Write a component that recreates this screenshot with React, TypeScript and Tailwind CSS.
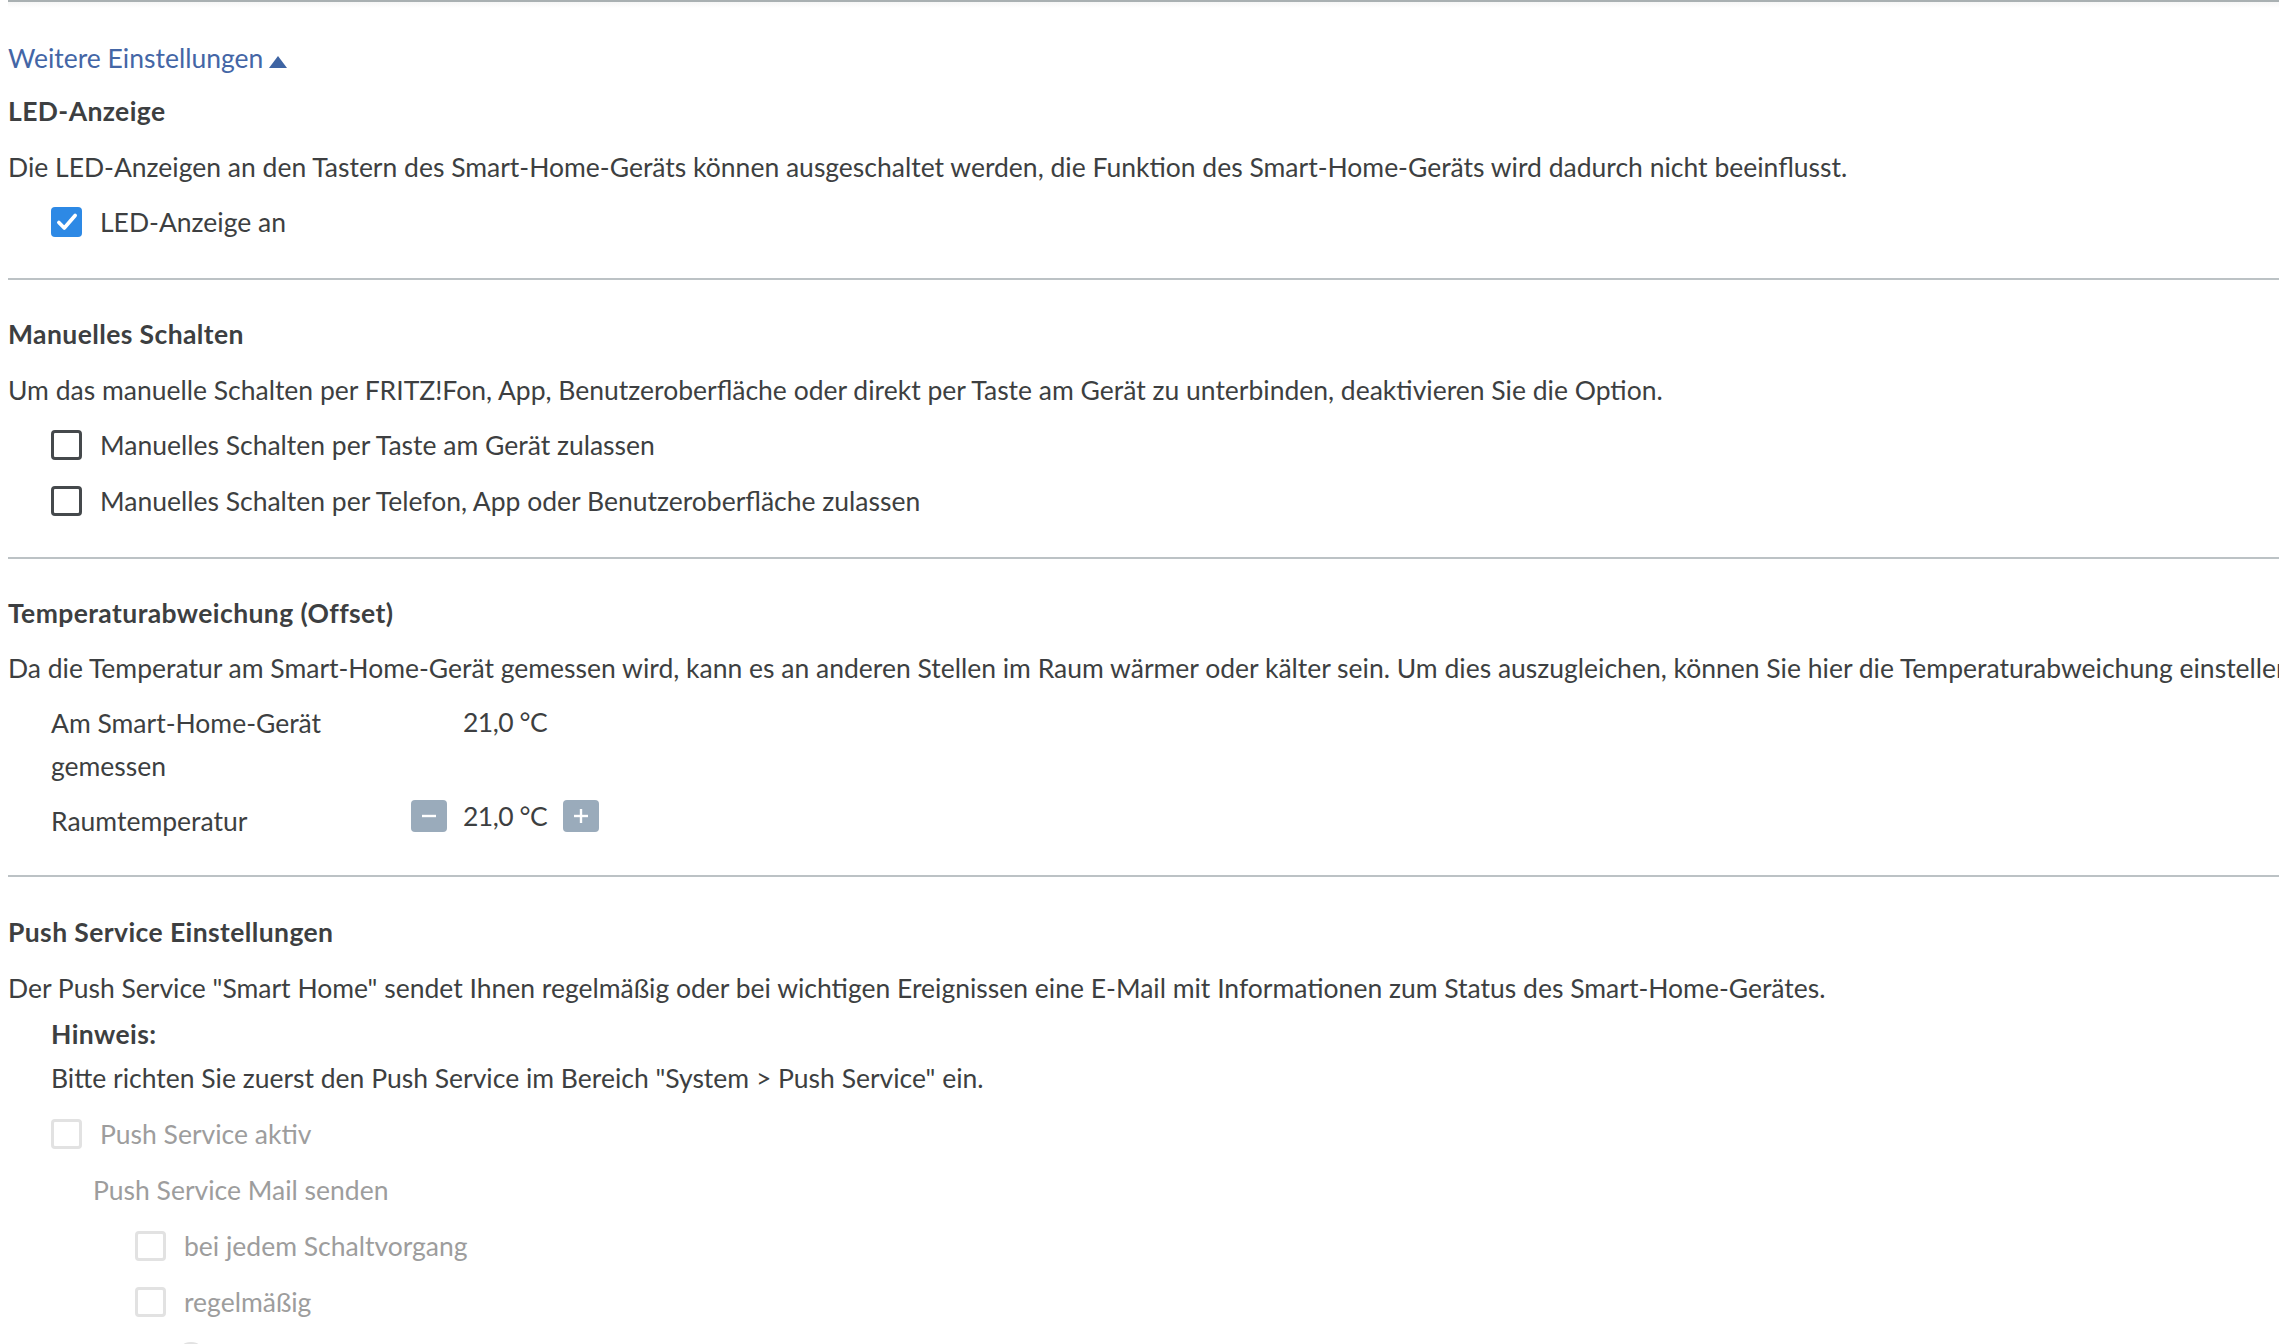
import React from 'react';
import clsx from 'clsx';

function Checkbox({ checked, disabled }: { checked?: boolean; disabled?: boolean }) {
  if (checked) {
    return (
      <span className="flex h-[30px] w-[31px] shrink-0 items-center justify-center rounded-[4px] bg-[#2d89e5]">
        <svg viewBox="0 0 24 24" className="h-[26px] w-[26px]" fill="none" stroke="white" strokeWidth={3.4} strokeLinecap="round" strokeLinejoin="round">
          <path d="M4.5 12.5l5 5L19.5 6" />
        </svg>
      </span>
    );
  }
  return (
    <span
      className={clsx(
        'h-[30px] w-[31px] shrink-0 rounded-[4px] border-[3px] bg-white',
        disabled ? 'border-[#e2e2e2]' : 'border-[#45494c]'
      )}
    />
  );
}

function CheckRow({ label, checked, disabled, indent }: { label: string; checked?: boolean; disabled?: boolean; indent: string }) {
  return (
    <label className={clsx('flex h-[44px] items-center gap-[18px]', indent, disabled && 'text-[#9d9d9d]')}>
      <Checkbox checked={checked} disabled={disabled} />
      <span>{label}</span>
    </label>
  );
}

function StepButton({ plus }: { plus?: boolean }) {
  return (
    <button className="flex h-[32px] w-[36px] items-center justify-center rounded-[4px] bg-[#9aabbb]">
      <svg viewBox="0 0 20 20" className="h-[20px] w-[20px]" stroke="white" strokeWidth={2.4} strokeLinecap="butt">
        <path d="M3 10h14" />
        {plus && <path d="M10 3v14" />}
      </svg>
    </button>
  );
}

export default function App() {
  return (
    <div className="min-h-screen w-full overflow-hidden bg-white font-['Lato','Liberation_Sans',sans-serif] text-[26.5px] leading-[44px] text-[#3d3f41]">
      <div className="pl-2">
        <div className="border-t-2 border-[#a9b0b2]" />
        <div className="h-[6px] bg-gradient-to-b from-[#f6f6f6] to-white" />

        <button className="mt-[28px] flex items-end gap-[6px] text-[#4466a6]">
          <span>Weitere Einstellungen</span>
          <svg viewBox="0 0 18 12" className="mb-[12px] h-[12px] w-[18px]" fill="#3e64a3">
            <path d="M9 0L18 12H0z" />
          </svg>
        </button>

        {/* LED-Anzeige */}
        <section className="mt-[9px] flex flex-col gap-[11.5px] border-b-2 border-[#bcc2c5] pb-[34px]">
          <h3 className="font-bold tracking-[0.4px]">LED-Anzeige</h3>
          <p className="whitespace-nowrap">
            Die LED-Anzeigen an den Tastern des Smart-Home-Geräts können ausgeschaltet werden, die Funktion des Smart-Home-Geräts wird dadurch nicht beeinflusst.
          </p>
          <CheckRow indent="pl-[43px]" label="LED-Anzeige an" checked />
        </section>

        {/* Manuelles Schalten */}
        <section className="flex flex-col gap-[11.5px] border-b-2 border-[#bcc2c5] pb-[34px] pt-[32px]">
          <h3 className="font-bold tracking-[0.4px]">Manuelles Schalten</h3>
          <p className="whitespace-nowrap">
            Um das manuelle Schalten per FRITZ!Fon, App, Benutzeroberfläche oder direkt per Taste am Gerät zu unterbinden, deaktivieren Sie die Option.
          </p>
          <CheckRow indent="pl-[43px]" label="Manuelles Schalten per Taste am Gerät zulassen" />
          <CheckRow indent="pl-[43px]" label="Manuelles Schalten per Telefon, App oder Benutzeroberfläche zulassen" />
        </section>

        {/* Temperaturabweichung */}
        <section className="flex flex-col gap-[11.5px] border-b-2 border-[#bcc2c5] pb-[32px] pt-[32px]">
          <h3 className="font-bold tracking-[0.4px]">Temperaturabweichung (Offset)</h3>
          <p className="whitespace-nowrap">
            Da die Temperatur am Smart-Home-Gerät gemessen wird, kann es an anderen Stellen im Raum wärmer oder kälter sein. Um dies auszugleichen, können Sie hier die Temperaturabweichung einstellen.
          </p>
          <div className="flex pl-[43px]">
            <div className="w-[360px] leading-[43px]">Am Smart-Home-Gerät gemessen</div>
            <div className="pl-[52px] leading-[40px] tracking-[-0.5px]">21,0 °C</div>
          </div>
          <div className="flex pl-[43px]">
            <div className="w-[360px]">Raumtemperatur</div>
            <div className="flex h-[44px] items-center gap-[16px] pb-[10px]">
              <StepButton />
              <span className="tracking-[-0.5px]">21,0 °C</span>
              <StepButton plus />
            </div>
          </div>
        </section>

        {/* Push Service */}
        <section className="flex flex-col gap-[11.5px] pt-[33px]">
          <h3 className="font-bold tracking-[0.4px]">Push Service Einstellungen</h3>
          <div>
            <p className="whitespace-nowrap">
              Der Push Service "Smart Home" sendet Ihnen regelmäßig oder bei wichtigen Ereignissen eine E-Mail mit Informationen zum Status des Smart-Home-Gerätes.
            </p>
            <div className="mt-[2px] pl-[43px]">
              <p className="font-bold tracking-[0.4px]">Hinweis:</p>
              <p>Bitte richten Sie zuerst den Push Service im Bereich "System &gt; Push Service" ein.</p>
            </div>
          </div>
          <CheckRow indent="pl-[43px] mt-[1px]" label="Push Service aktiv" disabled />
          <div className="pl-[85px] text-[#9d9d9d]">Push Service Mail senden</div>
          <CheckRow indent="pl-[127px] mt-[1px]" label="bei jedem Schaltvorgang" disabled />
          <CheckRow indent="pl-[127px]" label="regelmäßig" disabled />
          <div className="flex h-[44px] items-center pl-[168px]">
            <span className="h-[30px] w-[30px] shrink-0 rounded-full border-[3px] border-[#e2e2e2]" />
          </div>
        </section>
      </div>
    </div>
  );
}
